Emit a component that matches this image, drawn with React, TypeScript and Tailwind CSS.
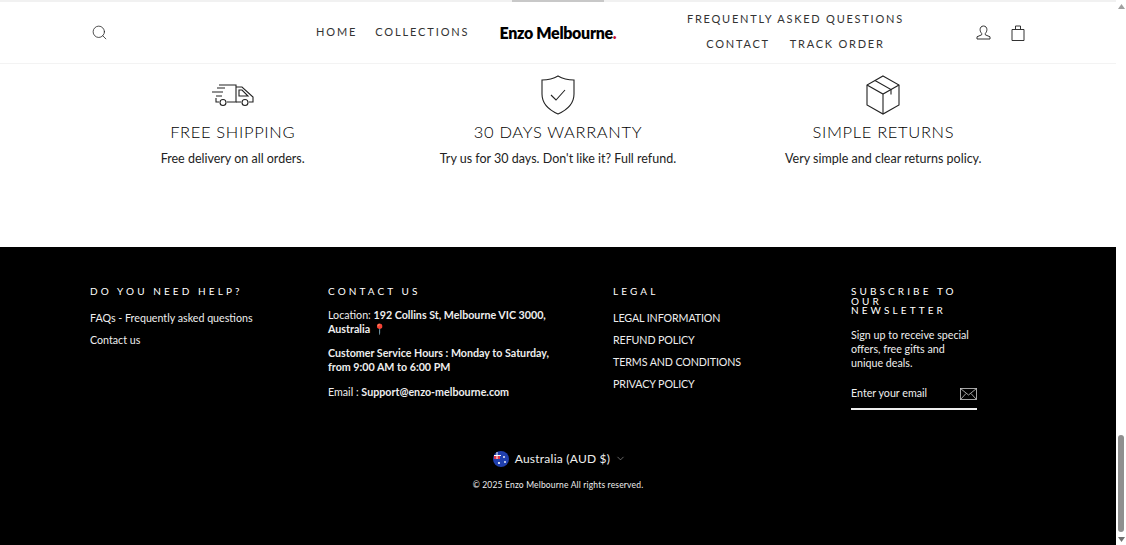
import { Search, ChevronDown } from "lucide-react";

const features = [
  { title: "FREE SHIPPING", text: "Free delivery on all orders.", icon: "truck" },
  { title: "30 DAYS WARRANTY", text: "Try us for 30 days. Don't like it? Full refund.", icon: "shield" },
  { title: "SIMPLE RETURNS", text: "Very simple and clear returns policy.", icon: "box" },
];

const legalLinks = ["LEGAL INFORMATION", "REFUND POLICY", "TERMS AND CONDITIONS", "PRIVACY POLICY"];

function FeatureIcon({ name }: { name: string }) {
  if (name === "truck") {
    return (
      <svg width="44" height="24" viewBox="0 0 44 24" fill="none" stroke="#222" strokeWidth="1.1">
        <path d="M8 2h17v17H16M8 19H5v-4" />
        <path d="M25 4h6l11 10v5h-4M25 19h5" />
        <path d="M28 7h3l6 6h-9z" />
        <circle cx="12" cy="19.5" r="3" />
        <circle cx="34" cy="19.5" r="3" />
        <path d="M6 5h8M1 9h11M5 13h6" />
      </svg>
    );
  }
  if (name === "shield") {
    return (
      <svg width="36" height="40" viewBox="0 0 36 40" fill="none" stroke="#222" strokeWidth="1.1">
        <path d="M18 1c5 3 10 4 16 4v14c0 10-7 16-16 20C9 35 2 29 2 19V5c6 0 11-1 16-4z" />
        <path d="M11 20l5 5 9-10" />
      </svg>
    );
  }
  return (
    <svg width="36" height="40" viewBox="0 0 36 40" fill="none" stroke="#222" strokeWidth="1.1">
      <path d="M18 1l16 9v20l-16 9-16-9V10z" />
      <path d="M2 10l16 9 16-9M18 19v20" />
      <path d="M10 5.5l16 9v5" />
    </svg>
  );
}

function Heading({ children }: { children: React.ReactNode }) {
  return <h3 className="text-[10px] leading-[9.5px] tracking-[0.31em] text-white">{children}</h3>;
}

export default function App() {
  return (
    <div className="flex h-screen overflow-hidden bg-white font-['Lato',sans-serif]">
      <div className="flex min-w-0 flex-1 flex-col">
        <div className="flex h-[2px] shrink-0 justify-center bg-[#f1f1f1]">
          <div className="h-[2px] w-[92px] bg-[#c8c8c8]" />
        </div>
        <header className="flex h-[62px] shrink-0 items-center border-b border-[#f3f3f3] pl-[91px] pr-[91px]">
          <Search size={17} strokeWidth={1.1} className="text-[#222]" />
          <nav className="ml-[208px] flex gap-[18px] text-[11px] tracking-[0.17em] text-[#333]">
            <a>HOME</a>
            <a>COLLECTIONS</a>
          </nav>
          <div className="ml-[30px] w-[118px] whitespace-nowrap text-[16px] font-extrabold tracking-[-0.02em] text-black">
            Enzo Melbourne<span className="text-[#c8102e]">.</span>
          </div>
          <nav className="mb-[2px] ml-[70px] flex w-[216px] flex-col items-center gap-[11px] text-[11px] leading-[14px] tracking-[0.16em] text-[#333]">
            <a className="whitespace-nowrap">FREQUENTLY ASKED QUESTIONS</a>
            <div className="flex gap-[20px]">
              <a>CONTACT</a>
              <a>TRACK ORDER</a>
            </div>
          </nav>
          <div className="ml-auto flex items-center gap-[20px] text-[#333]">
            <svg width="15" height="15" viewBox="0 0 15 15" fill="none" stroke="#333" strokeWidth="1">
              <path d="M7.5 1c2.2 0 3.4 1.6 3.4 3.6 0 1.700-.8 3-1.600 3.900v1.300l4.700 2v2.200H1v-2.200l4.700-2V8.500C4.900 7.600 4.100 6.300 4.100 4.600 4.100 2.600 5.300 1 7.500 1z" />
            </svg>
            <svg width="14" height="16" viewBox="0 0 14 16" fill="none" stroke="#333" strokeWidth="1">
              <path d="M1 4.500h12v11H1zM4.500 4.500V1h5v3.500" />
            </svg>
          </div>
        </header>

        <section className="grid h-[183px] shrink-0 grid-cols-3 px-[70px] pt-[11px]">
          {features.map((f) => (
            <div key={f.title} className="flex flex-col items-center">
              <div className="flex h-[40px] items-center">
                <FeatureIcon name={f.icon} />
              </div>
              <h2 className="mt-[5px] text-[16.5px] leading-[24px] font-light tracking-[0.04em] text-black">{f.title}</h2>
              <p className="mt-[5px] text-[12.5px] leading-[20px] text-[#222]">{f.text}</p>
            </div>
          ))}
        </section>

        <footer className="flex-1 bg-black px-[90px] pt-[40px] text-[10.7px] text-[#eee]">
          <div className="grid grid-cols-[238px_285px_238px_1fr]">
            <div>
              <Heading>DO YOU NEED HELP?</Heading>
              <ul className="mt-[14px] flex flex-col gap-[8px] leading-[14px]">
                <li>FAQs - Frequently asked questions</li>
                <li>Contact us</li>
              </ul>
            </div>
            <div>
              <Heading>CONTACT US</Heading>
              <div className="mt-[11px] flex w-[230px] flex-col gap-[10px] leading-[14px]">
                <p>
                  Location: <b>192 Collins St, Melbourne VIC 3000,</b>
                  <br />
                  <b>Australia</b> <span className="text-[#e0245e]">📍</span>
                </p>
                <p>
                  <b>Customer Service Hours : Monday to Saturday,</b>
                  <br />
                  <b>from 9:00 AM to 6:00 PM</b>
                </p>
                <p className="pt-[1px]">
                  Email : <b>Support@enzo-melbourne.com</b>
                </p>
              </div>
            </div>
            <div>
              <Heading>LEGAL</Heading>
              <ul className="mt-[14px] flex flex-col gap-[8px] leading-[14px] tracking-[-0.01em]">
                {legalLinks.map((l) => (
                  <li key={l}>{l}</li>
                ))}
              </ul>
            </div>
            <div className="w-[126px]">
              <Heading>SUBSCRIBE TO OUR NEWSLETTER</Heading>
              <p className="mt-[12px] leading-[14px]">Sign up to receive special offers, free gifts and unique deals.</p>
              <div className="mt-[15px] flex items-center justify-between border-b-2 border-[#eee] pb-[7px]">
                <span>Enter your email</span>
                <svg width="17" height="12" viewBox="0 0 17 12" fill="none" stroke="#ccc" strokeWidth="0.8" className="mt-[2px]">
                  <rect x="0.5" y="0.5" width="16" height="11" />
                  <path d="M0.5 0.5L8.500 7l8-6.500M0.5 11.500L6 5.500M16.500 11.500L11 5.500" />
                </svg>
              </div>
            </div>
          </div>
          <div className="mt-[41px] flex items-center justify-center gap-[5px] pl-[3px] text-[12px] leading-[16px]">
            <svg width="16" height="16" viewBox="0 0 16 16" className="mr-[1px]">
              <circle cx="8" cy="8" r="8" fill="#1f3fae" />
              <path d="M1 4h6v4H1z" fill="#e0344a" />
              <path d="M4 1v7M1 4.500h7" stroke="#fff" strokeWidth="1" />
              <circle cx="11" cy="6" r="0.9" fill="#fff" />
              <circle cx="12" cy="11" r="0.9" fill="#fff" />
              <circle cx="6" cy="12" r="1.100" fill="#fff" />
            </svg>
            <span className="tracking-[0.02em]">Australia (AUD $)</span>
            <ChevronDown size={11} strokeWidth={1.2} className="text-[#bbb]" />
          </div>
          <p className="mt-[12px] text-center text-[8.5px] leading-[12px] tracking-[0.02em]">© 2025 Enzo Melbourne All rights reserved.</p>
        </footer>
      </div>

      <aside className="flex w-[10px] shrink-0 flex-col items-center bg-white">
        <svg width="7" height="5" viewBox="0 0 7 5" className="mt-[4px]">
          <path d="M3.500 0L7 5H0z" fill="#a0a0a0" />
        </svg>
        <div className="mt-auto mb-[5px] h-[97px] w-[6px] rounded-full bg-[#8f8f8f]" />
        <svg width="7" height="5" viewBox="0 0 7 5" className="mb-[3px]">
          <path d="M0 0h7L3.500 5z" fill="#707070" />
        </svg>
      </aside>
    </div>
  );
}
